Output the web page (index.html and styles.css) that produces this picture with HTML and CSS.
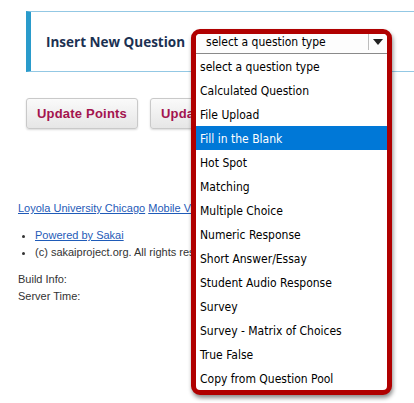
FILE: index.html
```html
<!DOCTYPE html>
<html>
<head>
<meta charset="utf-8">
<link rel="stylesheet" href="styles.css">
</head>
<body>
<div class="page">
  <div class="panel">
    <h2 class="panel-title">Insert New Question</h2>
  </div>
  <div class="actions">
    <button class="btn">Update Points</button>
    <button class="btn">Update Order</button>
  </div>
  <div class="footer">
    <div class="footer-links"><a href="#">Loyola University Chicago</a> <a href="#">Mobile View</a></div>
    <ul class="footer-list">
      <li><a href="#">Powered by Sakai</a></li>
      <li>(c) sakaiproject.org. All rights reserved.</li>
    </ul>
    <div class="footer-line">Build Info:</div>
    <div class="footer-line">Server Time:</div>
  </div>

  <div class="callout">
    <div class="select-head">
      <span class="select-value">select a question type</span>
      <span class="select-arrow"><svg width="10" height="6" viewBox="0 0 10 6"><path d="M0 0H10L5 6Z" fill="#222"/></svg></span>
    </div>
    <ul class="options">
      <li>select a question type</li>
      <li>Calculated Question</li>
      <li>File Upload</li>
      <li class="selected">Fill in the Blank</li>
      <li>Hot Spot</li>
      <li>Matching</li>
      <li>Multiple Choice</li>
      <li>Numeric Response</li>
      <li>Short Answer/Essay</li>
      <li>Student Audio Response</li>
      <li>Survey</li>
      <li>Survey - Matrix of Choices</li>
      <li>True False</li>
      <li>Copy from Question Pool</li>
    </ul>
  </div>
</div>
</body>
</html>
```

FILE: styles.css
```css
html, body {
  margin: 0;
  padding: 0;
  background: #fff;
  overflow: hidden;
}
.page {
  position: relative;
  width: 414px;
  height: 403px;
  overflow: hidden;
  font-family: "Liberation Sans", Arial, sans-serif;
}
.panel {
  margin: 11px -40px 0 26px;
  height: 59px;
  border-top: 1px solid #93c8e4;
  border-bottom: 1px solid #93c8e4;
  border-left: 5px solid #2a9bcb;
  display: flex;
  align-items: center;
  padding-left: 15px;
}
.panel-title {
  margin: 0;
  font-family: "Open Sans", sans-serif;
  font-weight: 700;
  font-size: 13.5px;
  color: #1b3152;
}
.actions {
  display: flex;
  gap: 12px;
  margin: 26px 0 0 26px;
}
.btn {
  height: 31px;
  padding: 0 10px;
  border: 1px solid #c9c9c9;
  border-radius: 3px;
  background: linear-gradient(#fafafa, #e6e6e6);
  box-shadow: 0 1px 2px rgba(0,0,0,0.15);
  font-family: "Liberation Sans", Arial, sans-serif;
  font-weight: 700;
  font-size: 13px;
  letter-spacing: 0.2px;
  color: #a3144e;
}
.footer {
  margin: 71px 0 0 18px;
  font-size: 11px;
  line-height: 17px;
  color: #333;
}
.footer a {
  color: #1f5bb8;
}
.footer-list {
  margin: 10px 0;
  padding-left: 17px;
}
.callout {
  position: absolute;
  left: 191px;
  top: 29px;
  width: 201px;
  box-sizing: border-box;
  border: 5px solid #b00000;
  border-radius: 9px;
  background: #fff;
  box-shadow: 1px 3px 4px rgba(0,0,0,0.45);
  overflow: hidden;
  font-family: "DejaVu Sans Condensed", "DejaVu Sans", sans-serif;
  font-size: 12px;
  color: #000;
}
.select-head {
  display: flex;
  height: 19px;
  border-bottom: 1px solid #8a8a8a;
  background: #fdfdfd;
}
.select-value {
  flex: 1;
  padding-left: 10px;
  line-height: 16px;
}
.select-arrow {
  width: 18px;
  height: 16px;
  border-left: 1px solid #bdbdbd;
  display: flex;
  align-items: center;
  justify-content: center;
}
.options {
  list-style: none;
  margin: 0;
  padding: 0;
}
.options li {
  height: 24px;
  line-height: 26px;
  padding-left: 4px;
  white-space: nowrap;
}
.options li.selected {
  background: #0078d7;
  color: #fff;
}
```
